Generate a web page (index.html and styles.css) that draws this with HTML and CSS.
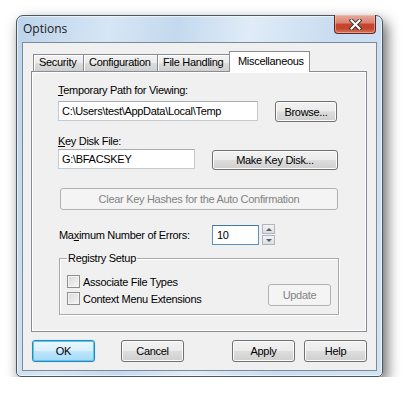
FILE: index.html
```html
<!DOCTYPE html>
<html lang="en">
<head>
    <meta charset="UTF-8">
    <title>Options</title>
    <link rel="stylesheet" href="styles.css">
</head>
<body>
    <!-- Dialog window -->
    <div class="window">
        <div class="titlebar">
            <span class="title">Options</span>
            <button class="close-btn" aria-label="Close">
                <svg width="13" height="11" viewBox="0 0 13 11">
                    <path d="M2.5 1.5 L10.5 9.5 M10.5 1.5 L2.5 9.5" stroke="#3b3b3b" stroke-width="4" stroke-linecap="square" fill="none"/>
                    <path d="M2.5 1.5 L10.5 9.5 M10.5 1.5 L2.5 9.5" stroke="#ffffff" stroke-width="2" stroke-linecap="square" fill="none"/>
                </svg>
            </button>
        </div>

        <div class="client">
            <!-- Tabs -->
            <div class="tabs">
                <div class="tab tab-security">Security</div>
                <div class="tab tab-config">Configuration</div>
                <div class="tab tab-files">File Handling</div>
                <div class="tab active">Miscellaneous</div>
            </div>

            <div class="panel">
                <div class="label"><u>T</u>emporary Path for Viewing:</div>
                <div class="row row-path">
                    <div class="textbox path-box">C:\Users\test\AppData\Local\Temp</div>
                    <button class="btn browse-btn">Browse...</button>
                </div>

                <div class="label label-key"><u>K</u>ey Disk File:</div>
                <div class="row row-key">
                    <div class="textbox key-box">G:\BFACSKEY</div>
                    <button class="btn keydisk-btn">Make Key Disk...</button>
                </div>

                <button class="btn disabled clear-btn">Clear Key Hashes for the Auto Confirmation</button>

                <div class="row row-errors">
                    <span class="errors-label">Ma<u>x</u>imum Number of Errors:</span>
                    <div class="textbox focus errors-box">10</div>
                    <div class="spin">
                        <div class="spin-btn"><span class="arrow-up"></span></div>
                        <div class="spin-btn"><span class="arrow-down"></span></div>
                    </div>
                </div>

                <fieldset class="group">
                    <legend>Registry Setup</legend>
                    <div class="group-body">
                        <div class="checks">
                            <label class="check"><span class="box"></span>Associate File Types</label>
                            <label class="check"><span class="box"></span>Context Menu Extensions</label>
                        </div>
                        <button class="btn disabled update-btn">Update</button>
                    </div>
                </fieldset>
            </div>

            <!-- Dialog buttons -->
            <div class="dialog-buttons">
                <button class="btn default">OK</button>
                <button class="btn cancel-btn">Cancel</button>
                <button class="btn apply-btn">Apply</button>
                <button class="btn help-btn">Help</button>
            </div>
        </div>
    </div>
</body>
</html>
```

FILE: styles.css
```css
/* General Reset */
* {
    margin: 0;
    padding: 0;
    box-sizing: border-box;
}

body {
    background-color: #ffffff;
    font-family: "Liberation Sans", Arial, sans-serif;
    font-size: 11px;
    letter-spacing: -0.3px;
    color: #000;
}

u {
    text-decoration: underline;
    text-underline-offset: 1px;
}

/* Window frame */
.window {
    margin: 15px 0 0 16px;
    width: 367px;
    height: 362px;
    border: 1px solid #4b5661;
    border-radius: 7px 7px 5px 5px;
    padding: 0 5px 5px 5px;
    display: flex;
    flex-direction: column;
    background: linear-gradient(100deg, #bcd3ea 0%, #d6e6f5 22%, #c4d9ee 38%, #e0ecf8 55%, #c8dcf0 75%, #d3e4f4 100%);
    box-shadow: 4px 6px 14px rgba(0, 0, 0, 0.6), inset 0 0 0 1px rgba(255, 255, 255, 0.6);
}

.titlebar {
    height: 26px;
    display: flex;
    justify-content: space-between;
    align-items: flex-start;
}

.title {
    font-family: "Open Sans", "Liberation Sans", sans-serif;
    font-size: 12px;
    letter-spacing: 0;
    color: #1a1a1a;
    padding: 4px 0 0 1px;
}

.close-btn {
    width: 42px;
    height: 19px;
    margin: -1px 1px 0 0;
    border: 1px solid #5b2a24;
    border-top: none;
    border-radius: 0 0 4px 4px;
    background: linear-gradient(#e8aa9d 0%, #d98170 45%, #c4452c 50%, #c4452c 75%, #d8775c 100%);
    box-shadow: inset 0 0 0 1px rgba(255, 200, 190, 0.5);
    display: flex;
    align-items: center;
    justify-content: center;
}

/* Client area */
.client {
    flex: 1;
    border: 1px solid #7b8b9b;
    background-color: #f0f0f0;
    padding: 8px 9px 0 8px;
    display: flex;
    flex-direction: column;
}

.tabs {
    height: 20px;
    display: flex;
    align-items: flex-end;
    padding-left: 2px;
}

.tab {
    height: 17px;
    line-height: 15px;
    padding: 0 5px;
    border: 1px solid #898c95;
    border-bottom: none;
    margin-right: -1px;
    background: linear-gradient(#f3f3f3 0%, #ebebeb 50%, #dddddd 51%, #cfcfcf 100%);
    box-shadow: inset 1px 1px 0 #fff;
}

.tab-security { width: 51px; }
.tab-config { width: 75px; }
.tab-files { width: 73px; }

.tab.active {
    width: 81px;
    height: 21px;
    line-height: 18px;
    margin-bottom: -1px;
    padding-left: 8px;
    background: #ffffff;
    box-shadow: none;
    position: relative;
    z-index: 1;
}

.panel {
    height: 261px;
    border: 1px solid #898c95;
    background-color: #f0f0f0;
    box-shadow: inset 0 0 0 1px #ffffff;
    padding: 12px 0 0 26px;
}

.label {
    height: 13px;
    line-height: 13px;
}

.label-key {
    margin-top: 13px;
}

.row {
    display: flex;
    align-items: flex-start;
}

.row-path {
    margin-top: 4px;
}

.row-key {
    margin-top: 1px;
}

.textbox {
    height: 20px;
    line-height: 18px;
    padding-left: 3px;
    background: #fff;
    border: 1px solid #c5c9d0;
    border-top-color: #abadb3;
}

.textbox.focus {
    border-color: #5793bf;
    border-top-color: #3d7bad;
}

.path-box { width: 200px; }
.key-box { width: 137px; }

/* Buttons */
.btn {
    display: block;
    height: 22px;
    font-family: inherit;
    font-size: 11px;
    letter-spacing: -0.3px;
    color: #000;
    border: 1px solid #707070;
    border-radius: 3px;
    background: linear-gradient(#f2f2f2 0%, #ebebeb 48%, #dddddd 52%, #cfcfcf 100%);
    box-shadow: inset 0 0 0 1px #fcfcfc;
}

.btn.default {
    border-color: #3c7fb1;
    background: linear-gradient(#eaf6fd 0%, #d9f0fc 48%, #bee6fd 52%, #a7d9f5 100%);
    box-shadow: inset 0 0 0 1px #48d2f9, 0 0 1px #70c0e7;
}

.btn.disabled {
    color: #838383;
    border-color: #adb2b5;
    background: #f4f4f4;
    box-shadow: none;
}

.browse-btn {
    width: 62px;
    height: 21px;
    margin-left: 17px;
}

.keydisk-btn {
    width: 126px;
    height: 20px;
    margin: 1px 0 0 17px;
}

.clear-btn {
    width: 278px;
    margin: 18px 0 0 2px;
}

.row-errors {
    margin-top: 14px;
    align-items: center;
}

.errors-label {
    width: 154px;
    padding-left: 1px;
    padding-top: 1px;
}

.errors-box {
    width: 47px;
    padding-left: 4px;
}

.spin {
    margin-left: 3px;
    width: 13px;
    display: flex;
    flex-direction: column;
    gap: 1px;
}

.spin-btn {
    height: 10px;
    border: 1px solid #b2b6bc;
    background: linear-gradient(#f4f4f4, #dcdcdc);
    display: flex;
    align-items: center;
    justify-content: center;
}

.arrow-up {
    border-left: 3px solid transparent;
    border-right: 3px solid transparent;
    border-bottom: 3px solid #4c607f;
}

.arrow-down {
    border-left: 3px solid transparent;
    border-right: 3px solid transparent;
    border-top: 3px solid #4c607f;
}

/* Registry group box */
.group {
    width: 280px;
    margin: 7px 0 0 1px;
    border: 1px solid #a9a9a9;
    box-shadow: inset 1px 1px 0 #fff, 1px 1px 0 #fff;
    padding: 0 7px 7px 7px;
}

.group legend {
    margin-left: 0;
    padding: 0 1px;
    line-height: 13px;
}

.group-body {
    display: flex;
    justify-content: space-between;
    align-items: flex-end;
    padding-top: 8px;
}

.check {
    display: flex;
    align-items: center;
    height: 17px;
}

.check .box {
    width: 13px;
    height: 13px;
    margin-right: 3px;
    border: 1px solid #8f8f8f;
    background: linear-gradient(135deg, #d8d8d8, #f7f7f7);
    box-shadow: inset 0 0 0 1px #f4f4f4;
}

.update-btn {
    width: 63px;
    margin-bottom: 1px;
}

/* Dialog buttons */
.dialog-buttons {
    display: flex;
    margin-top: 8px;
    padding-left: 1px;
}

.dialog-buttons .btn {
    width: 63px;
}

.cancel-btn {
    margin-left: 26px;
}

.apply-btn {
    margin-left: auto;
}

.help-btn {
    margin-left: 9px;
}
```
